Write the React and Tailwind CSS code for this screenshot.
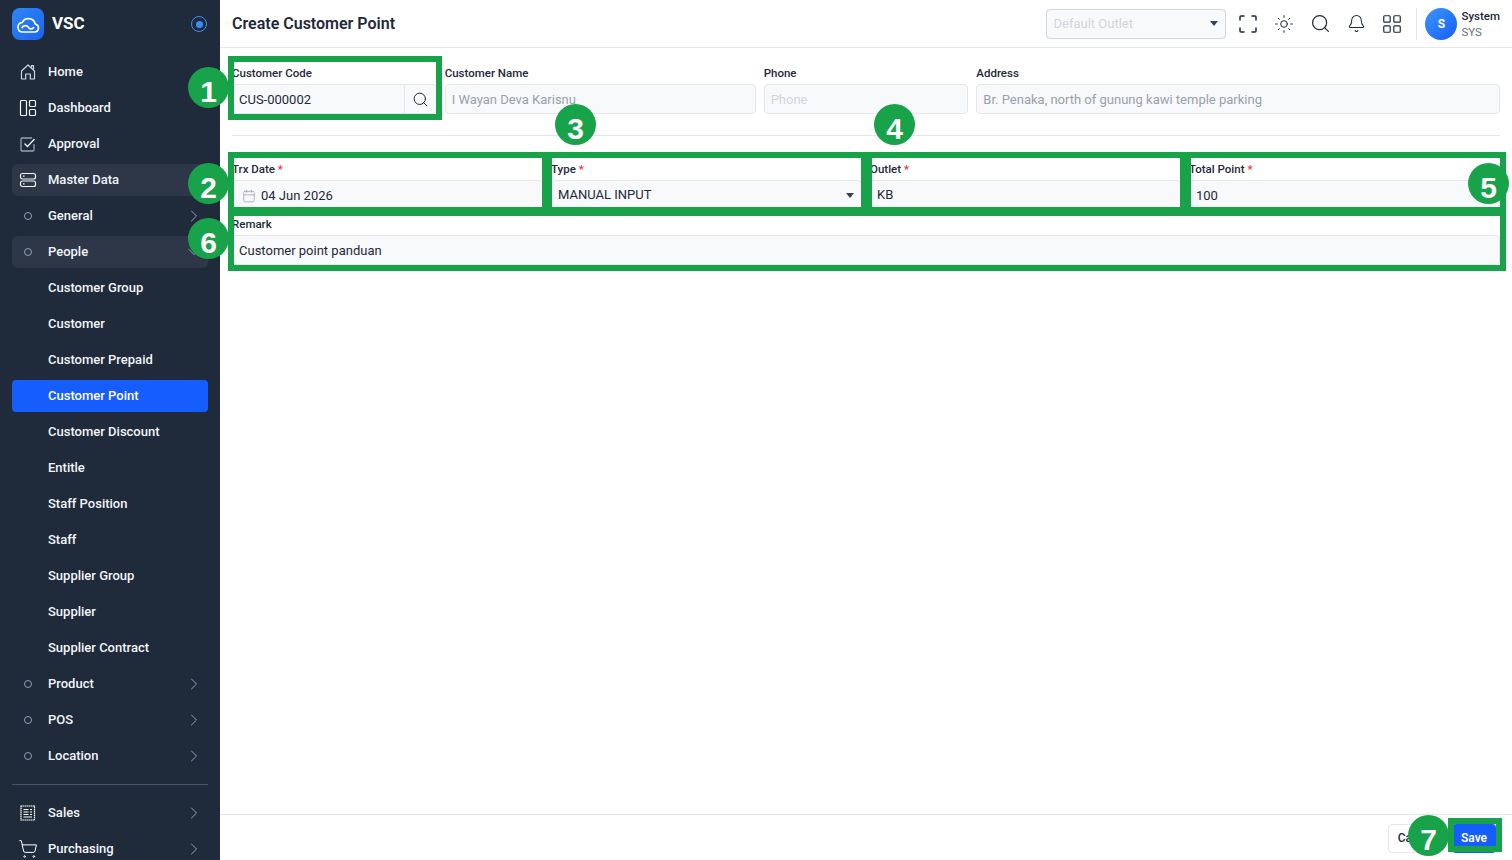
import React from "react";
import { Bell, Calendar, ChevronDown, ChevronRight, LayoutGrid, Search, ShoppingCart, Sun } from "lucide-react";

const HomeIcon = () => (
  <svg width="18" height="18" viewBox="0 0 18 18" fill="none" stroke="#cbd5e1" strokeWidth="1.2" strokeLinejoin="round">
    <path d="M2.5 16V8L9 2l6.5 6v8h-4.2v-5H6.7v5z" />
    <path d="M12.5 4.6V2.6h2v3.8" />
  </svg>
);

const DashboardIcon = () => (
  <svg width="18" height="18" viewBox="0 0 18 18" fill="none" stroke="#f1f5f9" strokeWidth="1.2">
    <rect x="1.5" y="1.5" width="6" height="15" rx="1" />
    <rect x="10.5" y="1.5" width="6" height="6" rx="1" />
    <rect x="10.5" y="10.5" width="6" height="6" rx="1" />
  </svg>
);

const ApprovalIcon = () => (
  <svg width="18" height="18" viewBox="0 0 18 18" fill="none" strokeWidth="1.3">
    <path d="M15 9v6a1 1 0 0 1-1 1H3a1 1 0 0 1-1-1V4a1 1 0 0 1 1-1h10" stroke="#94a3b8" />
    <path d="M5.5 8.5 8.5 11.5 15.5 4" stroke="#f1f5f9" />
  </svg>
);

const ServerIcon = () => (
  <svg width="18" height="18" viewBox="0 0 18 18" fill="none" stroke="#f1f5f9" strokeWidth="1.2">
    <rect x="1.5" y="2.5" width="15" height="5.5" rx="2" />
    <rect x="1.5" y="10" width="15" height="5.5" rx="2" />
    <path d="M4 5.2h1.5M4 12.8h1.5" />
  </svg>
);

const SalesIcon = () => (
  <svg width="18" height="18" viewBox="0 0 18 18" fill="none" stroke="#ffffff" strokeWidth="1.2">
    <rect x="2" y="2" width="13.5" height="14" strokeDasharray="1.6 0.4" />
    <path d="M4.5 5.5h5M4.5 8h5M4.5 10.5h5M4.5 13h8.5M11 5.5h2M11 8h2M11 10.5h2" />
  </svg>
);

const ScanIcon = () => (
  <svg width="22" height="22" viewBox="0 0 22 22" fill="none" stroke="currentColor" strokeWidth="1.5">
    <path d="M3 7.5V4a1 1 0 0 1 1-1h3.5M14.5 3H18a1 1 0 0 1 1 1v3.5M19 14.5V18a1 1 0 0 1-1 1h-3.5M7.5 19H4a1 1 0 0 1-1-1v-3.5" />
  </svg>
);

const Ring = () => <span className="block w-2 h-2 rounded-full border border-slate-400" />;

const NavItem = ({ icon, label, arrow, open, tone = "" }) => (
  <div className={`h-8 shrink-0 flex items-center rounded-md pl-[7px] pr-1 ${tone}`}>
    <span className="w-[18px] flex justify-center">{icon}</span>
    <span className="ml-[11px] text-[13px] font-medium text-slate-100 flex-1">{label}</span>
    {arrow && <ChevronRight className="w-5 h-5 text-slate-400" strokeWidth={1.2} />}
    {open && <ChevronDown className="w-5 h-5 text-slate-400" strokeWidth={1.2} />}
  </div>
);

const SubItem = ({ label, active }) => (
  <div className={`h-8 shrink-0 flex items-center rounded-[4px] pl-9 text-[13px] font-medium ${active ? "bg-[#155dfc] text-white" : "text-slate-100"}`}>
    {label}
  </div>
);

const Sidebar = () => (
  <aside className="w-[220px] shrink-0 h-full bg-[#1f2a3a] overflow-hidden flex flex-col">
    <div className="h-12 shrink-0 flex items-center px-3">
      <div className="w-8 h-8 rounded-lg bg-gradient-to-br from-[#2f86f6] to-[#1d64ee] flex items-center justify-center">
        <svg width="24" height="20" viewBox="0 0 24 20" fill="none" stroke="white" strokeWidth="1.7" strokeLinecap="round" strokeLinejoin="round">
          <path d="M6 18h12.5a4 4 0 0 0 .8-7.9A7 7 0 0 0 6.2 8.5 4.8 4.8 0 0 0 6 18z" />
          <path d="M6 13.6a3.6 3.6 0 0 1 6.4-.2c1.2 2 3.4 2 5.2.2" />
        </svg>
      </div>
      <span className="ml-2 text-[17px] font-bold text-white flex-1">VSC</span>
      <span className="w-4 h-4 mr-[1px] rounded-full border border-[#3b8bf5] flex items-center justify-center">
        <span className="w-[7px] h-[7px] rounded-full bg-[#3b8bf5]" />
      </span>
    </div>
    <nav className="flex flex-col gap-1 px-3 pt-2">
      <NavItem icon={<HomeIcon />} label="Home" />
      <NavItem icon={<DashboardIcon />} label="Dashboard" />
      <NavItem icon={<ApprovalIcon />} label="Approval" />
      <NavItem icon={<ServerIcon />} label="Master Data" tone="bg-[#2d3748]" />
      <NavItem icon={<Ring />} label="General" arrow />
      <NavItem icon={<Ring />} label="People" open tone="bg-[#2d3748]" />
      <SubItem label="Customer Group" />
      <SubItem label="Customer" />
      <SubItem label="Customer Prepaid" />
      <SubItem label="Customer Point" active />
      <SubItem label="Customer Discount" />
      <SubItem label="Entitle" />
      <SubItem label="Staff Position" />
      <SubItem label="Staff" />
      <SubItem label="Supplier Group" />
      <SubItem label="Supplier" />
      <SubItem label="Supplier Contract" />
      <NavItem icon={<Ring />} label="Product" arrow />
      <NavItem icon={<Ring />} label="POS" arrow />
      <NavItem icon={<Ring />} label="Location" arrow />
      <div className="h-px shrink-0 bg-slate-600 my-2" />
      <NavItem icon={<SalesIcon />} label="Sales" arrow />
      <NavItem
        icon={<ShoppingCart className="w-5 h-5 shrink-0 text-white" strokeWidth={1.2} />}
        label="Purchasing"
        arrow
      />
    </nav>
  </aside>
);

const Caret = () => (
  <span className="w-0 h-0 border-x-[4px] border-x-transparent border-t-[5px] border-t-gray-700" />
);

const Topbar = () => (
  <header className="h-12 shrink-0 border-b border-gray-200 flex items-center pl-3 pr-3">
    <h1 className="text-base font-semibold text-gray-800 flex-1">Create Customer Point</h1>
    <div className="w-[180px] h-[30px] mr-[11px] rounded-[4px] border border-gray-300 bg-[#f8f9fb] flex items-center justify-between pl-[6px] pr-[7px] text-[13px] text-gray-300">
      Default Outlet
      <Caret />
    </div>
    <div className="flex items-center gap-[14px] text-gray-800">
      <ScanIcon />
      <span className="w-[22px] flex justify-center">
        <Sun className="w-5 h-5" strokeWidth={1.2} />
      </span>
      <span className="w-[22px] flex justify-center">
        <Search className="w-[21px] h-[21px]" strokeWidth={1.4} />
      </span>
      <span className="w-[22px] flex justify-center">
        <Bell className="w-[19px] h-[19px]" strokeWidth={1.3} />
      </span>
      <LayoutGrid className="w-[22px] h-[22px]" strokeWidth={1.3} />
    </div>
    <div className="w-px h-8 bg-gray-200 ml-[13px] mr-2" />
    <div className="w-8 h-8 rounded-full bg-gradient-to-br from-[#3f95f7] to-[#1a5cfb] flex items-center justify-center text-xs font-bold text-white">
      S
    </div>
    <div className="ml-1 flex flex-col text-[11.5px] leading-4">
      <span className="font-medium text-gray-800">System</span>
      <span className="text-gray-500">SYS</span>
    </div>
  </header>
);

const Field = ({ label, required, className = "", children }) => (
  <div className={className}>
    <label className="block text-[11.5px] leading-4 font-medium text-gray-800 mb-[3px]">
      {label}
      {required && <span className="text-red-500"> *</span>}
    </label>
    {children}
  </div>
);

const boxClass = "h-[30px] w-full rounded-[4px] border border-gray-200 bg-[#f8f9fb] flex items-center px-[6px] text-[13px]";

const Form = () => (
  <div className="flex-1 px-3 pt-[17px]">
    <div className="grid grid-cols-12 gap-2">
      <Field label="Customer Code" className="col-span-2">
        <div className={`${boxClass} pr-0`}>
          <span className="flex-1 pt-[1px] text-gray-800">CUS-000002</span>
          <span className="w-8 h-full border-l border-gray-200 flex items-center justify-center">
            <Search className="w-[17px] h-[17px] text-gray-800" strokeWidth={1.4} />
          </span>
        </div>
      </Field>
      <Field label="Customer Name" className="col-span-3">
        <div className={`${boxClass} pt-[1px] text-gray-400`}>I Wayan Deva Karisnu</div>
      </Field>
      <Field label="Phone" className="col-span-2">
        <div className={`${boxClass} pt-[1px] text-gray-300`}>Phone</div>
      </Field>
      <Field label="Address" className="col-span-5">
        <div className={`${boxClass} pt-[1px] text-gray-400`}>Br. Penaka, north of gunung kawi temple parking</div>
      </Field>
    </div>
    <div className="h-px bg-gray-200 mt-[21px] mb-[25px]" />
    <div className="grid grid-cols-4 gap-2">
      <Field label="Trx Date" required>
        <div className={`${boxClass} pl-[9px] pt-[2px] text-gray-800`}>
          <Calendar className="w-[14px] h-[14px] text-gray-400 mr-[5px]" strokeWidth={1.3} />
          04 Jun 2026
        </div>
      </Field>
      <Field label="Type" required>
        <div className={`${boxClass} justify-between pr-[7px] text-gray-800`}>
          MANUAL INPUT
          <Caret />
        </div>
      </Field>
      <Field label="Outlet" required>
        <div className={`${boxClass} text-gray-800`}>KB</div>
      </Field>
      <Field label="Total Point" required>
        <div className={`${boxClass} pt-[2px] text-gray-800`}>100</div>
      </Field>
    </div>
    <Field label="Remark" className="mt-[6px]">
      <div className={`${boxClass} pt-[1px] text-gray-800`}>Customer point panduan</div>
    </Field>
  </div>
);

const Footer = () => (
  <footer className="h-[46px] shrink-0 border-t border-gray-200 flex items-center justify-end gap-2 pr-4 pt-[1px]">
    <button className="h-[29px] w-[56px] rounded-[4px] border border-gray-200 bg-white text-xs font-medium text-gray-800">
      Cancel
    </button>
    <button className="h-[29px] w-[44px] rounded-[4px] bg-[#155dfc] text-xs font-semibold text-white">
      Save
    </button>
  </footer>
);

const marks = [
  { n: 1, cls: "left-[188px] top-[67px]" },
  { n: 2, cls: "left-[188px] top-[163px]" },
  { n: 3, cls: "left-[555px] top-[104px]" },
  { n: 4, cls: "left-[874px] top-[104px]" },
  { n: 5, cls: "left-[1468px] top-[163px]" },
  { n: 6, cls: "left-[188px] top-[218px]" },
  { n: 7, cls: "left-[1408px] top-[815px]" },
];

const frames = [
  "left-[228px] top-[56px] w-[214px] h-[64px]",
  "left-[228px] top-[152px] w-[320px] h-[61px]",
  "left-[546px] top-[152px] w-[321px] h-[61px]",
  "left-[866px] top-[152px] w-[320px] h-[61px]",
  "left-[1185px] top-[152px] w-[321px] h-[61px]",
  "left-[228px] top-[210px] w-[1278px] h-[61px]",
  "left-[1448px] top-[818px] w-[54px] h-[34px]",
];

const Callouts = () => (
  <>
    {frames.map((cls) => (
      <div key={cls} className={`absolute border-[6px] border-[#18a34a] ${cls}`} />
    ))}
    {marks.map((m) => (
      <div
        key={m.n}
        className={`absolute w-[41px] h-[41px] rounded-full bg-[#18a34a] flex items-center justify-center pt-[9px] text-[30px] leading-none font-bold text-white font-['Liberation_Sans',sans-serif] ${m.cls}`}
      >
        {m.n}
      </div>
    ))}
  </>
);

export default function App() {
  return (
    <div className="relative w-full h-screen overflow-hidden flex bg-white font-['Roboto',sans-serif]">
      <Sidebar />
      <main className="flex-1 min-w-0 flex flex-col">
        <Topbar />
        <Form />
        <Footer />
      </main>
      <Callouts />
    </div>
  );
}
